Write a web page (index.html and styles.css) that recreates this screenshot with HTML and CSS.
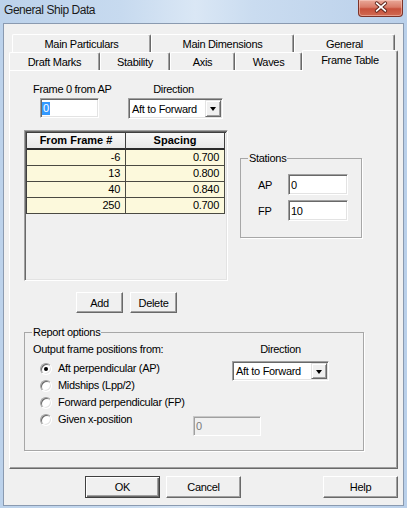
FILE: index.html
```html
<!DOCTYPE html>
<html>
<head>
<meta charset="utf-8">
<link rel="stylesheet" href="styles.css">
</head>
<body>
<div class="window">
  <div class="titlebar">
    <span class="title">General Ship Data</span>
    <div class="close">
      <svg width="45" height="16" viewBox="0 0 45 16">
        <path d="M19 3 L28 11 M28 3 L19 11" stroke="#5a2219" stroke-width="3.6" stroke-linecap="round" fill="none"/>
        <path d="M19 3 L28 11 M28 3 L19 11" stroke="#fff" stroke-width="1.8" stroke-linecap="round" fill="none"/>
      </svg>
    </div>
  </div>
  <div class="client">
    <div class="tabctl">
      <div class="tabrow back">
        <div class="tab t-mp">Main Particulars</div>
        <div class="tab t-md">Main Dimensions</div>
        <div class="tab t-gen">General</div>
      </div>
      <div class="tabrow front">
        <div class="tab t-dm">Draft Marks</div>
        <div class="tab t-st">Stability</div>
        <div class="tab t-ax">Axis</div>
        <div class="tab t-wv">Waves</div>
        <div class="tab t-ft selected">Frame Table</div>
      </div>
      <div class="panel">
        <div class="toprow">
          <div class="field f0">
            <div class="lbl">Frame 0 from AP</div>
            <div class="textbox tb-f0"><span class="sel">0</span></div>
          </div>
          <div class="field fdir">
            <div class="lbl">Direction</div>
            <div class="combo combo-top"><span class="ctext">Aft to Forward</span><span class="arrow"></span></div>
          </div>
        </div>
        <div class="midrow">
          <div class="gridbox">
            <div class="grid">
              <div class="hcell">From Frame #</div><div class="hcell">Spacing</div>
              <div class="cell">-6</div><div class="cell">0.700</div>
              <div class="cell">13</div><div class="cell">0.800</div>
              <div class="cell">40</div><div class="cell">0.840</div>
              <div class="cell">250</div><div class="cell">0.700</div>
            </div>
          </div>
          <fieldset class="group stations">
            <legend>Stations</legend>
            <div class="strow first"><span class="stlbl">AP</span><div class="textbox tb-st">0</div></div>
            <div class="strow"><span class="stlbl">FP</span><div class="textbox tb-st">10</div></div>
          </fieldset>
        </div>
        <div class="btnrow">
          <div class="btn small">Add</div>
          <div class="btn small">Delete</div>
        </div>
        <fieldset class="group report">
          <legend>Report options</legend>
          <div class="rbody">
            <div class="rleft">
              <div class="lbl">Output frame positions from:</div>
              <div class="radios">
                <div class="ropt"><span class="radio on"></span><span class="olbl">Aft perpendicular (AP)</span></div>
                <div class="ropt"><span class="radio"></span><span class="olbl">Midships (Lpp/2)</span></div>
                <div class="ropt"><span class="radio"></span><span class="olbl">Forward perpendicular (FP)</span></div>
                <div class="ropt given"><span class="radio"></span><span class="olbl glbl">Given x-position</span><div class="textbox tb-given">0</div></div>
              </div>
            </div>
            <div class="rright">
              <div class="lbl center">Direction</div>
              <div class="combo combo-rep"><span class="ctext">Aft to Forward</span><span class="arrow"></span></div>
            </div>
          </div>
        </fieldset>
      </div>
    </div>
    <div class="dlgbtns">
      <div class="btn big default">OK</div>
      <div class="btn big">Cancel</div>
      <div class="btn big help">Help</div>
    </div>
  </div>
</div>
</body>
</html>
```
FILE: styles.css
```css
html, body { margin: 0; padding: 0; }
body {
  font-family: "Liberation Sans", Arial, sans-serif;
  font-size: 11px;
  letter-spacing: -0.3px;
  color: #000;
  background: #c4d7ee;
}
.window {
  width: 407px;
  height: 508px;
  display: flex;
  flex-direction: column;
  background: linear-gradient(to right, #bcd2eb 0%, #c7daef 30%, #dae7f5 48%, #cadcf0 62%, #bad0ea 100%);
  overflow: hidden;
}
.titlebar {
  flex: 0 0 23px;
  height: 23px;
  display: flex;
  align-items: flex-start;
}
.title {
  padding: 3px 0 0 4px;
  font-size: 12px;
  line-height: 15px;
  letter-spacing: -0.45px;
  color: #1b1b1b;
}
.close {
  margin-left: auto;
  margin-right: 4px;
  width: 45px;
  height: 17px;
  box-sizing: border-box;
  border: 1px solid #7d3328;
  border-top: none;
  border-radius: 0 0 4px 4px;
  background: linear-gradient(#e9a898 0%, #d97b68 45%, #c7503b 55%, #d06a52 100%);
  box-shadow: inset 0 0 0 1px rgba(255,220,210,0.45);
  display: flex;
}
.close svg { margin-left: -1px; }
.client {
  flex: 1;
  margin: 0 3px 2px 3px;
  border: 1px solid #8a9ab0;
  background: #f0f0f0;
  padding: 10px 0 0 5px;
}

/* tab control */
.tabctl { width: 389px; }
.tabrow { display: flex; height: 18px; align-items: flex-end; }
.tabrow.back { margin-left: 3px; }
.tab {
  box-sizing: border-box;
  height: 18px;
  border-top: 1px solid #fff;
  border-left: 1px solid #fff;
  border-right: 1px solid #696969;
  border-radius: 2px 2px 0 0;
  box-shadow: inset -1px 0 #a0a0a0;
  background: #f0f0f0;
  text-align: center;
  line-height: 17px;
  padding-top: 1px;
  white-space: nowrap;
}
.t-mp { width: 139px; }
.t-md { width: 143px; }
.t-gen { width: 101px; }
.t-dm { width: 91px; }
.t-st { width: 70px; }
.t-ax { width: 65px; }
.t-wv { width: 67px; }
.t-ft { width: 96px; }
.tab.selected {
  height: 21px;
  margin-bottom: -1px;
  line-height: 19px;
  padding-top: 0;
  position: relative;
  z-index: 1;
}
.panel {
  box-sizing: border-box;
  height: 399px;
  border-top: 1px solid #fff;
  border-left: 1px solid #fff;
  border-right: 1px solid #696969;
  border-bottom: 1px solid #696969;
  box-shadow: inset -1px -1px #a0a0a0;
  padding-top: 12px;
}

.lbl { line-height: 13px; white-space: nowrap; }
.center { text-align: center; }

/* sunken controls */
.textbox, .combo {
  box-sizing: border-box;
  border: 1px solid;
  border-color: #a0a0a0 #ffffff #ffffff #a0a0a0;
  box-shadow: inset 1px 1px #696969, inset -1px -1px #e3e3e3;
  background: #fff;
  padding: 1px 2px;
  display: flex;
  align-items: center;
  white-space: nowrap;
  flex: none;
}
.combo { padding: 1px; }
.ctext { flex: 1; padding-left: 2px; }
.arrow {
  width: 16px;
  align-self: stretch;
  box-sizing: border-box;
  border: 1px solid;
  border-color: #e3e3e3 #696969 #696969 #e3e3e3;
  box-shadow: inset 1px 1px #fff, inset -1px -1px #a0a0a0;
  background: #f0f0f0;
  display: flex;
  align-items: center;
  justify-content: center;
}
.arrow::after {
  content: "";
  width: 0;
  height: 0;
  border-top: 4px solid #000;
  border-left: 3.5px solid transparent;
  border-right: 3.5px solid transparent;
  margin-top: 1px;
}

/* top row */
.toprow { display: flex; }
.f0 { margin-left: 23px; width: 77px; }
.f0 .lbl { text-align: center; }
.tb-f0 { margin: 2px 0 0 7px; width: 59px; height: 20px; padding-left: 1px; }
.sel { background: #3399ff; color: #fff; line-height: 13px; padding: 0 1px; }
.fdir { margin-left: 18px; width: 95px; }
.fdir .lbl { text-align: center; padding-right: 4px; }
.combo-top { margin-top: 2px; width: 95px; height: 21px; }

/* grid */
.midrow { display: flex; align-items: flex-start; margin-top: 11px; }
.gridbox {
  margin-left: 14px;
  width: 204px;
  height: 151px;
  box-sizing: border-box;
  border: 1px solid;
  border-color: #a0a0a0 #ffffff #ffffff #a0a0a0;
  box-shadow: inset 1px 1px #696969, inset -1px -1px #e3e3e3;
  padding: 1px 0 0 1px;
}
.grid {
  display: grid;
  grid-template-columns: 99px 99px;
  width: 199px;
  border-top: 1px solid #3f3f3f;
  border-left: 1px solid #3f3f3f;
}
.hcell {
  height: 15px;
  line-height: 15px;
  border-right: 1px solid #3f3f3f;
  border-bottom: 2px solid #2a2a2a;
  background: linear-gradient(#f8f8f8, #e8e8e8);
  text-align: center;
  font-weight: bold;
  letter-spacing: 0;
}
.cell {
  height: 15px;
  line-height: 15px;
  border-right: 1px solid #4a4a42;
  border-bottom: 1px solid #4a4a42;
  background: #fcf9dc;
  text-align: right;
  padding-right: 5px;
}

/* group boxes */
fieldset.group {
  margin: 0;
  padding: 0;
  min-width: 0;
  box-sizing: border-box;
  border: 1px solid #a7a7a7;
  box-shadow: 1px 1px 0 #fff;
}
fieldset.group legend {
  padding: 0 1px;
  margin-left: 7px;
  line-height: 13px;
  font-size: 11px;
}
.stations {
  margin-left: 12px !important;
  margin-top: 22px !important;
  width: 122px;
  height: 86px;
}
.strow { display: flex; align-items: center; margin-top: 5px; }
.strow.first { margin-top: 9px; }
.stlbl { margin-left: 17px; width: 30px; }
.tb-st { width: 60px; height: 21px; }

/* buttons */
.btn {
  box-sizing: border-box;
  height: 21px;
  border: 1px solid;
  border-color: #ffffff #696969 #696969 #ffffff;
  box-shadow: inset -1px -1px #a0a0a0;
  background: #f0f0f0;
  display: flex;
  align-items: center;
  justify-content: center;
}
.btnrow { display: flex; gap: 7px; margin: 11px 0 0 66px; }
.btn.small { width: 47px; }
.btn.big { width: 75px; height: 22px; }
.btn.default {
  border-color: #404040;
  box-shadow: inset 1px 1px #fff, inset -1px -1px #696969, inset -2px -2px #a0a0a0;
}

/* report */
.report {
  margin: 13px 0 0 14px !important;
  width: 340px;
  height: 125px;
}
.rbody { display: flex; margin-left: 8px; padding-top: 4px; }
.rleft { width: 199px; flex: none; }
.rright { width: 97px; flex: none; }
.radios { margin-top: 4px; }
.ropt { display: flex; align-items: center; height: 17px; }
.ropt.given { height: 25px; align-items: flex-start; }
.radio {
  width: 12px;
  height: 12px;
  flex: none;
  margin-left: 7px;
  box-sizing: border-box;
  border-radius: 50%;
  border: 1px solid;
  border-color: #a0a0a0 #ffffff #ffffff #a0a0a0;
  box-shadow: inset 1px 1px #696969, inset -1px -1px #e3e3e3;
  background: #fff;
  display: flex;
  align-items: center;
  justify-content: center;
}
.ropt.given .radio { margin-top: 3px; }
.radio.on::after {
  content: "";
  width: 4px;
  height: 4px;
  border-radius: 50%;
  background: #000;
}
.olbl { margin-left: 6px; line-height: 17px; white-space: nowrap; flex: none; }
.glbl { width: 135px; }
.tb-given {
  margin-top: 5px;
  width: 68px;
  height: 20px;
  background: #f0f0f0;
  color: #7a7a7a;
  border-color: #c8c8c8 #ffffff #ffffff #c8c8c8;
  box-shadow: inset 1px 1px #a0a0a0;
}
.combo-rep { margin-top: 5px; width: 97px; height: 20px; }

/* dialog buttons */
.dlgbtns { display: flex; gap: 6px; margin-top: 7px; padding: 0 5px 0 76px; }
.btn.help { margin-left: auto; }
```
